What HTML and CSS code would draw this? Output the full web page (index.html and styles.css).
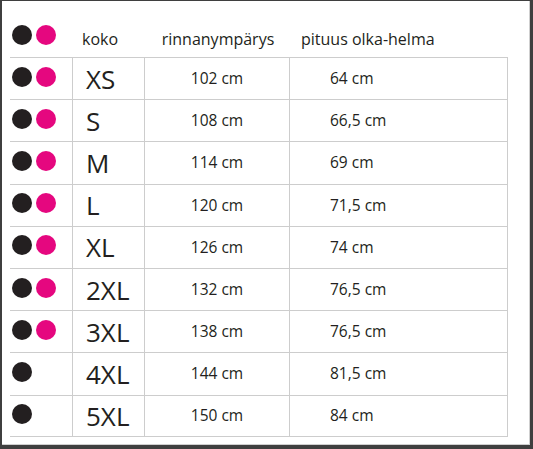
FILE: index.html
```html
<!DOCTYPE html>
<html lang="fi">
<head>
<meta charset="utf-8">
<title>Kokotaulukko</title>
<link rel="stylesheet" href="styles.css">
</head>
<body>
<div class="sheet">
  <div class="grid">
    <div class="hcell dots"><span class="dot black"></span><span class="dot pink"></span></div>
    <div class="hcell koko">koko</div>
    <div class="hcell center">rinnanympärys</div>
    <div class="hcell pit">pituus olka-helma</div>

    <div class="cell dots"><span class="dot black"></span><span class="dot pink"></span></div>
    <div class="cell size">XS</div><div class="cell num">102 cm</div><div class="cell len">64 cm</div>

    <div class="cell dots"><span class="dot black"></span><span class="dot pink"></span></div>
    <div class="cell size">S</div><div class="cell num">108 cm</div><div class="cell len">66,5 cm</div>

    <div class="cell dots"><span class="dot black"></span><span class="dot pink"></span></div>
    <div class="cell size">M</div><div class="cell num">114 cm</div><div class="cell len">69 cm</div>

    <div class="cell dots"><span class="dot black"></span><span class="dot pink"></span></div>
    <div class="cell size">L</div><div class="cell num">120 cm</div><div class="cell len">71,5 cm</div>

    <div class="cell dots"><span class="dot black"></span><span class="dot pink"></span></div>
    <div class="cell size">XL</div><div class="cell num">126 cm</div><div class="cell len">74 cm</div>

    <div class="cell dots"><span class="dot black"></span><span class="dot pink"></span></div>
    <div class="cell size">2XL</div><div class="cell num">132 cm</div><div class="cell len">76,5 cm</div>

    <div class="cell dots"><span class="dot black"></span><span class="dot pink"></span></div>
    <div class="cell size">3XL</div><div class="cell num">138 cm</div><div class="cell len">76,5 cm</div>

    <div class="cell dots last"><span class="dot black"></span></div>
    <div class="cell size last">4XL</div><div class="cell num last">144 cm</div><div class="cell len last">81,5 cm</div>

    <div class="cell dots final"><span class="dot black"></span></div>
    <div class="cell size final">5XL</div><div class="cell num final">150 cm</div><div class="cell len final">84 cm</div>
  </div>
</div>
</body>
</html>
```

FILE: styles.css
```css
html, body {
  margin: 0;
  padding: 0;
  background: #ffffff;
}

.sheet {
  box-sizing: border-box;
  width: 533px;
  height: 449px;
  border-style: solid;
  border-color: #3f3f3f;
  border-width: 1px 3px 4px 2px;
  box-shadow: inset -1px -1px 0 #cfcfcf;
  font-family: "Open Sans", "Noto Sans", sans-serif;
  color: #231f20;
  padding-left: 8px;
}

.grid {
  display: grid;
  grid-template-columns: 62px 72px 145px 219px;
  grid-template-rows: 56px repeat(9, 42.2px);
}

.hcell {
  display: flex;
  align-items: flex-end;
  font-size: 16px;
  line-height: 20px;
  padding-bottom: 8px;
  box-sizing: border-box;
  white-space: nowrap;
}

.hcell.dots {
  padding-bottom: 12px;
}

.koko {
  padding-left: 10px;
}

.center {
  justify-content: center;
  padding-left: 3px;
}

.pit {
  padding-left: 12px;
}

.cell {
  box-sizing: border-box;
  border-top: 1px solid #cdcdcd;
  display: flex;
  align-items: center;
  white-space: nowrap;
}

.cell.final {
  border-bottom: 1px solid #cdcdcd;
}

.cell.size,
.cell.num,
.cell.len {
  border-left: 1px solid #cdcdcd;
}

.cell.len {
  border-right: 1px solid #cdcdcd;
  padding-left: 40px;
  font-size: 15.5px;
  padding-bottom: 1px;
}

.cell.num {
  justify-content: center;
  font-size: 15.5px;
  padding-bottom: 1px;
}

.cell.size {
  font-size: 26px;
  padding-left: 13px;
}

.dots {
  display: flex;
  gap: 4px;
  padding-left: 2px;
}

.cell.dots {
  padding-bottom: 4px;
}

.dot {
  display: block;
  width: 20px;
  height: 20px;
  border-radius: 50%;
}

.dot.black {
  background: #231f20;
}

.dot.pink {
  background: #e5077f;
}
```
